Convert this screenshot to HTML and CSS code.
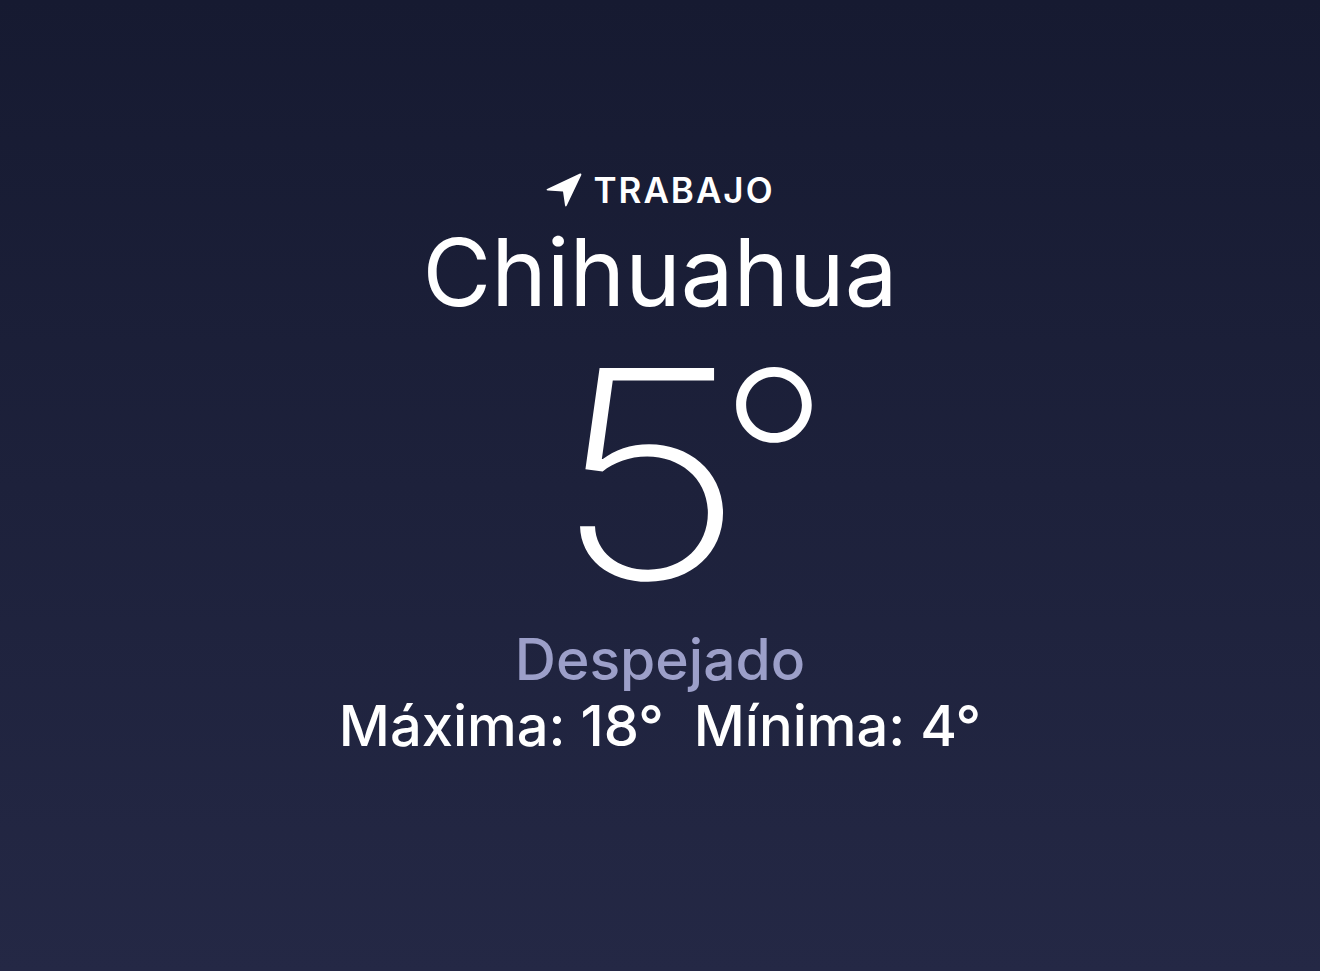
FILE: index.html
```html
<!DOCTYPE html>
<html lang="es">
<head>
    <meta charset="UTF-8">
    <meta name="viewport" content="width=device-width, initial-scale=1.0">
    <title>Chihuahua</title>
    <link rel="stylesheet" href="styles.css">
</head>
<body>
    <div class="weather">
        <p class="place">
            <svg class="arrow" viewBox="0 0 38 38" width="38" height="38">
                <path d="M35 2.5 Q37 2 36.2 4.2 L21.8 34.5 Q20.6 36.8 20 34.3 L18 20.6 L2.8 19.4 Q0.4 19 2.6 17.7 Z" fill="#fff"/>
            </svg>
            <span>TRABAJO</span>
        </p>
        <h1 class="city">Chihuahua</h1>
        <p class="temp"><span class="digit">5</span><span class="deg">°</span></p>
        <p class="sky">Despejado</p>
        <p class="range">Máxima: 18°&nbsp; Mínima: 4°</p>
    </div>
</body>
</html>
```

FILE: styles.css
```css
html, body {
    height: 100%;
}
body {
    margin: 0;
    background: linear-gradient(#161a31, #242845);
    color: #fff;
    font-family: Inter, "Noto Sans", "Liberation Sans", sans-serif;
    display: flex;
    justify-content: center;
}
.weather {
    display: flex;
    flex-direction: column;
    align-items: center;
    padding-top: 168px;
}
.weather p, .weather h1 {
    margin: 0;
}
.place {
    display: flex;
    align-items: center;
    gap: 10px;
    font-size: 35px;
    font-weight: 600;
    letter-spacing: 2px;
    line-height: 44px;
}
.arrow {
    display: block;
}
.city {
    font-size: 94px;
    font-weight: 400;
    line-height: 120px;
}
.temp {
    display: flex;
    align-items: flex-start;
    height: 296px;
    padding-left: 88px;
    font-weight: 160;
}
.digit {
    display: inline-block;
    font-size: 290px;
    line-height: 284px;
    transform: scaleX(1.15);
    transform-origin: right center;
}
.deg {
    font-size: 246px;
    line-height: 246px;
    margin-left: -28px;
    margin-top: 4px;
}
.sky {
    font-size: 57px;
    font-weight: 500;
    color: #9c9fc9;
    line-height: 64px;
}
.range {
    font-size: 56px;
    font-weight: 500;
    line-height: 68px;
}
```
